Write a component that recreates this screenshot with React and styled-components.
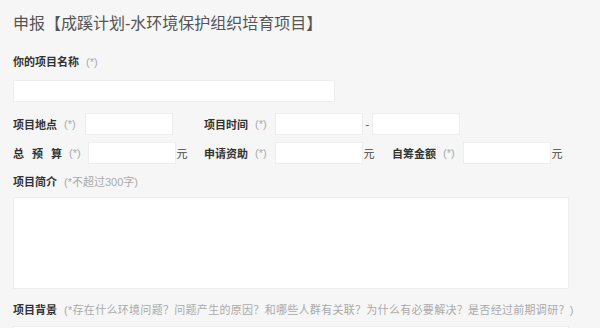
import React from "react";
import styled, { createGlobalStyle } from "styled-components";

const GlobalStyle = createGlobalStyle`
  body {
    margin: 0;
    background-color: #f6f6f6;
    font-family: "Liberation Sans", "Noto Sans CJK SC", sans-serif;
  }
`;

const Page = styled.div`
  padding: 12px 13px 0 13px;
  height: 328px;
  box-sizing: border-box;
  overflow: hidden;
`;

const Title = styled.h1`
  margin: 0;
  font-size: 16px;
  line-height: 24px;
  font-weight: normal;
  color: #555555;
`;

const Label = styled.div`
  margin-top: ${(props) => props.mt || "0"};
  font-size: 11px;
  line-height: 16px;
  font-weight: 700;
  color: #333333;
`;

const Hint = styled.span`
  margin-left: 7px;
  font-size: 11px;
  font-weight: normal;
  color: #aaaaaa;
  letter-spacing: ${(props) => props.ls || "0"};
`;

const TextInput = styled.input`
  display: block;
  box-sizing: border-box;
  width: ${(props) => props.w || "88px"};
  height: 22px;
  margin: ${(props) => props.m || "0"};
  padding: 0 6px;
  background: #ffffff;
  border: 1px solid #eeeeee;
  outline: none;
  font-size: 11px;
`;

const Row = styled.div`
  display: flex;
  align-items: center;
  margin-top: ${(props) => props.mt || "0"};
`;

const Group = styled.div`
  display: flex;
  align-items: center;
  flex: none;
  width: ${(props) => props.w || "auto"};
`;

const FieldName = styled.span`
  font-size: 11px;
  font-weight: 700;
  color: #333333;
  display: inline-block;
  width: ${(props) => props.w || "auto"};
  text-align-last: ${(props) => (props.w ? "justify" : "auto")};
`;

const Unit = styled.span`
  font-size: 11px;
  color: #444444;
  margin-left: 1px;
`;

const Dash = styled.span`
  font-size: 11px;
  color: #555555;
  margin: 0 3px;
`;

const TextBox = styled.textarea`
  display: block;
  box-sizing: border-box;
  width: 556px;
  height: ${(props) => props.h || "92px"};
  margin-top: ${(props) => props.mt || "0"};
  background: #ffffff;
  border: 1px solid #eeeeee;
  outline: none;
  resize: none;
`;

export default function App() {
  return (
    <>
      <GlobalStyle />
      <Page>
        <Title>申报【成蹊计划-水环境保护组织培育项目】</Title>

        <Label mt="18px">
          你的项目名称<Hint>(*)</Hint>
        </Label>
        <TextInput w="322px" m="10px 0 0 0" />

        <Row mt="11px">
          <Group w="191px">
            <FieldName>项目地点</FieldName>
            <Hint>(*)</Hint>
            <TextInput m="0 0 0 9px" />
          </Group>
          <Group>
            <FieldName>项目时间</FieldName>
            <Hint>(*)</Hint>
            <TextInput m="0 0 0 8px" />
            <Dash>-</Dash>
            <TextInput />
          </Group>
        </Row>

        <Row mt="7px">
          <Group w="191px">
            <FieldName w="49px">总预算</FieldName>
            <Hint>(*)</Hint>
            <TextInput m="0 0 0 7px" />
            <Unit>元</Unit>
          </Group>
          <Group w="188px">
            <FieldName>申请资助</FieldName>
            <Hint>(*)</Hint>
            <TextInput m="0 0 0 8px" />
            <Unit>元</Unit>
          </Group>
          <Group>
            <FieldName>自筹金额</FieldName>
            <Hint>(*)</Hint>
            <TextInput m="0 0 0 8px" />
            <Unit>元</Unit>
          </Group>
        </Row>

        <Label mt="10px">
          项目简介<Hint>(*不超过300字)</Hint>
        </Label>
        <TextBox mt="7px" />

        <Label mt="13px">
          项目背景
          <Hint ls="0.3px">
            (*存在什么环境问题？问题产生的原因？和哪些人群有关联？为什么有必要解决？是否经过前期调研？)
          </Hint>
        </Label>
        <TextBox mt="8px" />
      </Page>
    </>
  );
}
